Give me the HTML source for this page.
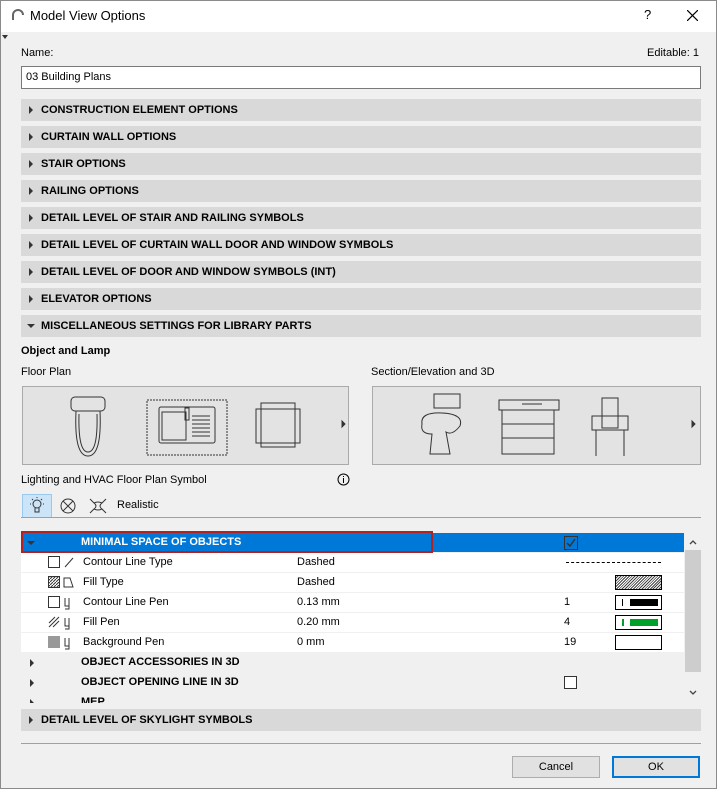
<!DOCTYPE html>
<html><head><style>
*{box-sizing:border-box;margin:0;padding:0}
body{width:717px;height:789px;background:#f0f0f0;font-family:"Liberation Sans",sans-serif;font-size:11px;color:#000;position:relative;overflow:hidden}
.a{position:absolute}
.bar{position:absolute;left:21px;width:680px;height:22px;background:#d9d9d9;font-weight:bold;font-size:11px;line-height:22px;padding-left:20px}
.bar:before{content:"";position:absolute;left:8px;top:7px;border-left:4px solid #333;border-top:4px solid transparent;border-bottom:4px solid transparent}
.bar.open:before{left:6px;top:9px;border-top:4px solid #333;border-left:4px solid transparent;border-right:4px solid transparent;border-bottom:0}
.row{position:absolute;left:21px;width:663px;height:19px;background:#fff;line-height:19px}
.g{background:#f0f0f0;font-weight:bold}
.row span{position:absolute}
.tri{position:absolute;left:9px;top:6px;border-left:4px solid #333;border-top:4px solid transparent;border-bottom:4px solid transparent}
.cb{position:absolute;width:13px;height:13px;border:1px solid #333;background:#fff}
.pen{position:absolute;left:594px;width:47px;height:15px;border:1px solid #000;top:2px;background:#fff}
</style></head><body>
<div class="a" style="left:0;top:0;width:717px;height:32px;background:#fff"></div>
<div class="a" style="left:0;top:0;width:717px;height:789px;border:1px solid #8a8a8a;z-index:5;pointer-events:none"></div>
<svg class="a" style="left:11px;top:9px" width="14" height="12"><path d="M2 11 V6 A5 5 0 0 1 12 6" fill="none" stroke="#666" stroke-width="2"/></svg>
<div class="a" style="left:30px;top:8px;font-size:13px">Model View Options</div>
<div class="a" style="left:644px;top:7px;font-size:13px">?</div>
<svg class="a" style="left:687px;top:10px" width="11" height="11"><path d="M0 0L11 11M11 0L0 11" stroke="#000" stroke-width="1.2"/></svg>
<div class="a" style="left:2px;top:35px;border-top:4px solid #333;border-left:3px solid transparent;border-right:3px solid transparent"></div>
<div class="a" style="left:21px;top:47px">Name:</div>
<div class="a" style="left:647px;top:47px">Editable: 1</div>
<div class="a" style="left:21px;top:66px;width:680px;height:23px;background:#fff;border:1px solid #7a7a7a;padding:4px 4px">03 Building Plans</div>
<div class="bar" style="top:99px">CONSTRUCTION ELEMENT OPTIONS</div>
<div class="bar" style="top:126px">CURTAIN WALL OPTIONS</div>
<div class="bar" style="top:153px">STAIR OPTIONS</div>
<div class="bar" style="top:180px">RAILING OPTIONS</div>
<div class="bar" style="top:207px">DETAIL LEVEL OF STAIR AND RAILING SYMBOLS</div>
<div class="bar" style="top:234px">DETAIL LEVEL OF CURTAIN WALL DOOR AND WINDOW SYMBOLS</div>
<div class="bar" style="top:261px">DETAIL LEVEL OF DOOR AND WINDOW SYMBOLS (INT)</div>
<div class="bar" style="top:288px">ELEVATOR OPTIONS</div>
<div class="bar open" style="top:315px">MISCELLANEOUS SETTINGS FOR LIBRARY PARTS</div>
<div class="a" style="left:21px;top:345px;font-weight:bold">Object and Lamp</div>
<div class="a" style="left:21px;top:366px">Floor Plan</div>
<div class="a" style="left:371px;top:366px">Section/Elevation and 3D</div>
<div class="a" style="left:22px;top:386px;width:327px;height:79px;background:#e3e3e3;border:1px solid #aaa"></div>
<svg class="a" style="left:22px;top:386px" width="327" height="79" fill="none" stroke="#333">
<rect x="49" y="11" width="34" height="14" rx="4"/><path d="M54 25 Q52 70 66 70 Q80 70 78 25"/><path d="M57 28 Q56 66 66 66 Q76 66 75 28"/>
<rect x="125" y="14" width="80" height="55" stroke-dasharray="2 1"/><rect x="137" y="21" width="56" height="36" rx="2"/><rect x="140" y="26" width="24" height="28"/><path d="M170 30h18M170 34h18M170 38h18M170 42h18M170 46h18M170 50h18"/><rect x="163" y="22" width="4" height="12"/>
<rect x="239" y="17" width="34" height="44"/><rect x="234" y="23" width="44" height="34"/>
<path d="M320 35v6l3-3z" fill="#333"/></svg>
<div class="a" style="left:372px;top:386px;width:329px;height:79px;background:#e3e3e3;border:1px solid #aaa"></div>
<svg class="a" style="left:372px;top:386px" width="329" height="79" fill="none" stroke="#333">
<path d="M62 8h26v14h-26z M50 38 Q48 26 70 27 Q92 28 88 40 Q80 50 74 46 L78 68 H58 L60 48 Q48 48 50 38z"/>
<path d="M127 14h60v10h-60z M130 24h52v44h-52z M130 38h52M130 52h52M150 18h20"/>
<path d="M230 12h16v30h-16z M220 30h36v14h-36z M224 44v26M252 44v26"/>
<path d="M320 35v6l3-3z" fill="#333"/></svg>
<div class="a" style="left:21px;top:474px">Lighting and HVAC Floor Plan Symbol</div>
<svg class="a" style="left:337px;top:473px" width="13" height="13"><circle cx="6.5" cy="6.5" r="5.5" fill="none" stroke="#000"/><path d="M6.5 5v5M6.5 3v1" stroke="#000"/></svg>
<div class="a" style="left:22px;top:494px;width:30px;height:24px;background:#cce4f7;border:1px solid #99c9ef"></div>
<svg class="a" style="left:28px;top:496px" width="150" height="20" fill="none" stroke="#333">
<circle cx="9" cy="8" r="4"/><path d="M7 12v4h4v-4M2 8h1M15 8h1M9 1v1M4 3l1 1M14 3l-1 1"/>
<circle cx="40" cy="10" r="7"/><path d="M35 5l10 10M45 5l-10 10"/>
<path d="M62 3l4 4M78 3l-4 4M62 17l4-4M78 17l-4-4M66 7Q70 10 66 13M74 7Q70 10 74 13M66 7Q70 5 74 7M66 13Q70 15 74 13"/></svg>
<div class="a" style="left:117px;top:499px">Realistic</div>
<div class="a" style="left:21px;top:517px;width:680px;height:1px;background:#a0a0a0"></div>
<div class="row" style="top:533px;background:#0078d7;color:#fff;font-weight:bold"><span class="tri" style="left:6px;top:8px;border-top:4px solid #333;border-left:4px solid transparent;border-right:4px solid transparent;border-bottom:0"></span><span style="left:60px">MINIMAL SPACE OF OBJECTS</span></div>
<svg class="a" style="left:564px;top:536px" width="14" height="14"><rect x="0.5" y="0.5" width="13" height="13" fill="#0078d7" stroke="#333"/><path d="M3 7l3 3 5-7" stroke="#333" stroke-width="1.5" fill="none"/></svg>
<div class="a" style="left:21px;top:531px;width:412px;height:22px;border:2px solid #b22222"></div>
<div class="row" style="top:553px"><span style="left:62px">Contour Line Type</span><span style="left:276px">Dashed</span><span class="a" style="left:545px;top:9px;width:95px;border-top:1px dashed #000"></span></div>
<div class="row" style="top:573px"><span style="left:62px">Fill Type</span><span style="left:276px">Dashed</span><span class="pen" style="background:repeating-linear-gradient(135deg,#fff 0 1px,#444 1px 2px)"></span></div>
<div class="row" style="top:593px"><span style="left:62px">Contour Line Pen</span><span style="left:276px">0.13 mm</span><span style="left:543px">1</span><span class="pen"><i class="a" style="left:6px;top:3px;width:1px;height:7px;background:#000"></i><i class="a" style="left:14px;top:3px;width:28px;height:7px;background:#000"></i></span></div>
<div class="row" style="top:613px"><span style="left:62px">Fill Pen</span><span style="left:276px">0.20 mm</span><span style="left:543px">4</span><span class="pen"><i class="a" style="left:6px;top:3px;width:2px;height:7px;background:#00a02a"></i><i class="a" style="left:14px;top:3px;width:28px;height:7px;background:#00a02a"></i></span></div>
<div class="row" style="top:633px"><span style="left:62px">Background Pen</span><span style="left:276px">0 mm</span><span style="left:543px">19</span><span class="pen"></span></div>
<svg class="a" style="left:47px;top:555px" width="30" height="96" fill="none" stroke="#333">
<rect x="1.5" y="1.5" width="11" height="11"/><path d="M18 12l8-9"/>
<rect x="1.5" y="21.5" width="11" height="11" fill="url(#h)"/><path d="M17 32h9l-3-9h-6z"/>
<rect x="1.5" y="41.5" width="11" height="11"/><path d="M18 43v8h4v-8M22 51v3h-4"/>
<path d="M2 72l10-10M2 68l6-6M6 72l6-6"/><path d="M18 63v8h4v-8M22 71v3h-4"/>
<rect x="1" y="81" width="12" height="12" fill="#999" stroke="none"/><path d="M18 83v8h4v-8M22 91v3h-4"/>
<defs><pattern id="h" width="3" height="3" patternUnits="userSpaceOnUse"><path d="M0 3L3 0" stroke="#333"/></pattern></defs></svg>
<div class="row g" style="top:653px"><span class="tri"></span><span style="left:60px">OBJECT ACCESSORIES IN 3D</span></div>
<div class="row g" style="top:673px"><span class="tri"></span><span style="left:60px">OBJECT OPENING LINE IN 3D</span></div>
<div class="cb" style="left:564px;top:676px"></div>
<div class="row g" style="top:693px;height:10px;overflow:hidden"><span class="tri"></span><span style="left:60px">MEP</span></div>
<div class="a" style="left:685px;top:533px;width:16px;height:170px;background:#f0f0f0"></div>
<div class="a" style="left:685px;top:550px;width:16px;height:122px;background:#cdcdcd"></div>
<svg class="a" style="left:688px;top:538px" width="10" height="165" fill="none" stroke="#444" stroke-width="1.3"><path d="M2 6l3-3 3 3M2 153l3 3 3-3"/></svg>
<div class="bar" style="top:709px">DETAIL LEVEL OF SKYLIGHT SYMBOLS</div>
<div class="a" style="left:21px;top:743px;width:680px;height:1px;background:#a0a0a0"></div>
<div class="a" style="left:512px;top:756px;width:88px;height:22px;background:#e1e1e1;border:1px solid #adadad;text-align:center;line-height:20px">Cancel</div>
<div class="a" style="left:612px;top:756px;width:88px;height:22px;background:#e1e1e1;border:2px solid #0078d7;text-align:center;line-height:18px">OK</div>
</body></html>
